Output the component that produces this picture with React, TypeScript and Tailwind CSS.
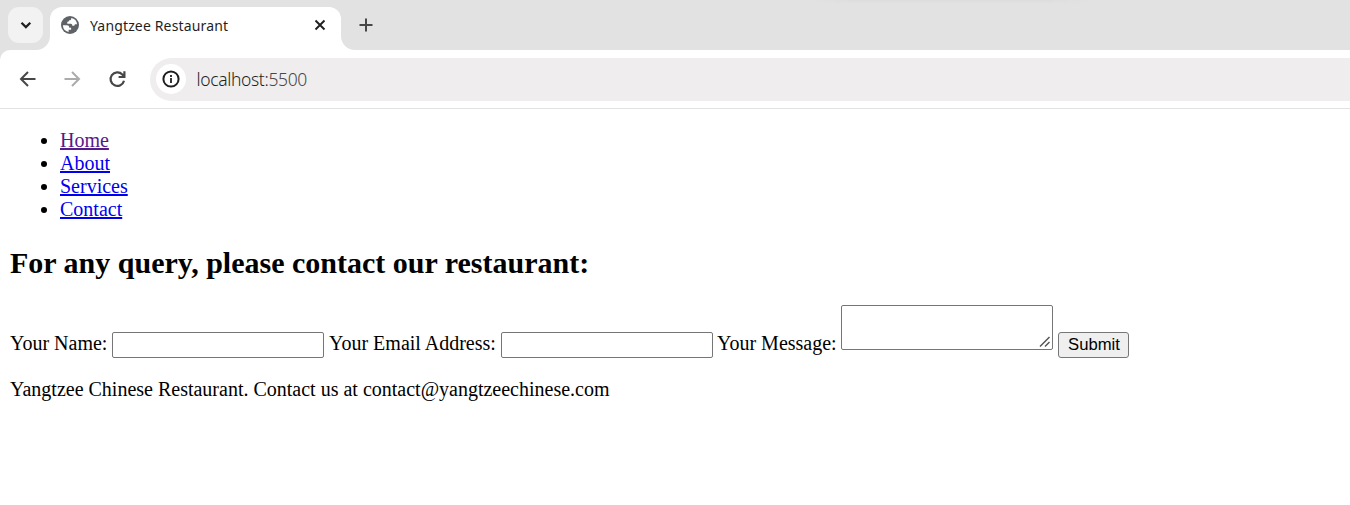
import type { ReactNode } from "react";

function Icon({ d, className, width = 2 }: { d: string; className: string; width?: number }) {
  return (
    <svg viewBox="0 0 20 20" className={className} fill="none" stroke="currentColor" strokeWidth={width}>
      <path d={d} />
    </svg>
  );
}

function Globe() {
  return (
    <svg viewBox="0 0 18 18" className="ml-[11px] size-[18px] shrink-0">
      <circle cx="9" cy="9" r="9" fill="#5f6368" />
      <path
        d="M10.2 1.9c.3 1.7-.5 2.3-2 2.4-.3 1.4-.9 1.5-1.900 1.500v1.900h3.500c1.300 0 1.500 1 1.500 2.100h1.300c.9 0 1.200-.8 1.300-1.600h2.200A7.100 7.100 0 0 0 10.200 1.900ZM1.900 9.200h3.900c1.600 0 2.500.8 2.500 2.500h1.800v2h-2.500v2.200A7.100 7.100 0 0 1 1.900 9.200Z"
        fill="#fff"
      />
    </svg>
  );
}

function TabStrip() {
  return (
    <div className="flex h-[50px] bg-[#e2e2e2]">
      <button className="ml-2 mt-[7px] flex h-9 w-[35px] shrink-0 items-center justify-center rounded-[11px] bg-[#f2f2f2] text-[#1f1f1f]">
        <Icon d="M5.500 7.700l4.400 4.400L14.300 7.700" className="size-5" width={2.200} />
      </button>
      <div className="flex w-[7px] shrink-0 items-end justify-end">
        <svg viewBox="0 0 14 14" className="size-[14px] shrink-0" fill="#fff">
          <path d="M14 0v14H0A14 14 0 0 0 14 0Z" />
        </svg>
      </div>
      <div className="mt-[7px] flex h-[43px] w-[291px] shrink-0 rounded-t-[12px] bg-white">
        <div className="flex h-9 w-full items-center">
          <Globe />
          <span className="ml-[11px] whitespace-nowrap font-['Noto_Sans','Open_Sans',sans-serif] text-[14px] tracking-[0.15px] text-[#1f1f1f]">
            Yangtzee Restaurant
          </span>
          <Icon d="M5.500 5.500l9 9M14.500 5.500l-9 9" className="ml-auto mr-[11px] size-5 text-[#1f1f1f]" width={1.900} />
        </div>
      </div>
      <svg viewBox="0 0 14 14" className="mt-auto size-[14px] shrink-0" fill="#fff">
        <path d="M0 0v14h14A14 14 0 0 1 0 0Z" />
      </svg>
      <Icon d="M10 3.500v13M3.500 10h13" className="ml-[1px] mt-[15px] size-5 text-[#474747]" />
      <div className="ml-[440px] h-1 w-[270px] bg-gradient-to-b from-[#dddddd] to-[#e2e2e2] [mask-image:linear-gradient(to_right,transparent,black_12%,black_88%,transparent)]" />
    </div>
  );
}

function Toolbar() {
  return (
    <div className="bg-[#e2e2e2]">
      <div className="flex h-[59px] items-center rounded-tl-[10px] border-b border-[#e2e2e2] bg-white">
        <Icon d="M17.500 10H3.500M10 3L3 10l7 7" className="ml-[18px] size-5 shrink-0 text-[#474747]" />
        <Icon d="M2.500 10h14M10 3l7 7-7 7" className="ml-[24px] size-5 shrink-0 text-[#ababab]" />
        <svg viewBox="0 0 20 20" className="ml-[25px] size-5 shrink-0 text-[#474747]" fill="none" stroke="currentColor" strokeWidth="2.200">
          <path d="M17 11.700a6.800 6.800 0 1 1-1.700-6.300L17.200 7.400M17.400 2.200v5.800h-5.800" />
        </svg>
        <div className="ml-[23px] flex h-[43px] flex-1 items-center rounded-l-full bg-[#efedee]">
          <div className="ml-1.5 flex size-[30px] items-center justify-center rounded-full bg-white">
            <svg viewBox="0 0 20 20" className="size-5" fill="none" stroke="#1f1f1f" strokeWidth="2">
              <circle cx="10" cy="10" r="7.600" />
              <path d="M10 9v5M10 6v2" strokeWidth="1.800" />
            </svg>
          </div>
          <span className="ml-[10.5px] font-['Noto_Sans','Open_Sans',sans-serif] text-[17.500px] font-light tracking-[-0.350px] text-[#1f1f1f]">
            localhost:<span className="text-[#474747]">5500</span>
          </span>
        </div>
      </div>
    </div>
  );
}

function NavLink({ children, className = "text-[#0000ee]" }: { children: ReactNode; className?: string }) {
  return (
    <li>
      <a href="#" className={`underline ${className}`}>
        {children}
      </a>
    </li>
  );
}

const field = "w-[212px] rounded-[2px] border border-[#767676] bg-white";

export default function App() {
  return (
    <div className="h-[505px] overflow-hidden bg-white">
      <TabStrip />
      <Toolbar />
      <main className="px-[10px] pt-5 font-['Liberation_Serif',serif] text-[20px] leading-[23px] text-black">
        <ul className="list-disc pl-[50px]">
          <NavLink className="text-[#551a8b]">Home</NavLink>
          <NavLink>About</NavLink>
          <NavLink>Services</NavLink>
          <NavLink>Contact</NavLink>
        </ul>
        <h2 className="mt-[25px] text-[30px] leading-[34px] font-bold">For any query, please contact our restaurant:</h2>
        <form className="mt-[25px] flex h-[53px] items-end">
          <label htmlFor="name" className="mb-[3px] w-[102px] whitespace-nowrap">Your Name:</label>
          <input id="name" className={`${field} h-[26px]`} />
          <label htmlFor="email" className="mb-[3px] ml-[5px] w-[172px] whitespace-nowrap">Your Email Address:</label>
          <input id="email" className={`${field} h-[26px]`} />
          <label htmlFor="message" className="mb-[3px] ml-1 w-[124px] whitespace-nowrap">Your Message:</label>
          <div className={`${field} mb-2 flex h-[45px] items-end justify-end`}>
            <textarea id="message" className="h-full flex-1 resize-none outline-none" />
            <svg viewBox="0 0 12 12" className="mb-px mr-px size-3" fill="none" stroke="#555" strokeWidth="1.500">
              <path d="M1 10.500L10.500 1M6 10.500l4.500-4.500" />
            </svg>
          </div>
          <button type="button" className="ml-[5px] h-[26px] w-[71px] rounded-[3px] border border-[#767676] bg-[#efefef] pl-px font-['Liberation_Sans',sans-serif] text-[16.667px] leading-[22px]">
            Submit
          </button>
        </form>
        <p className="mt-5">Yangtzee Chinese Restaurant. Contact us at contact@yangtzeechinese.com</p>
      </main>
    </div>
  );
}
